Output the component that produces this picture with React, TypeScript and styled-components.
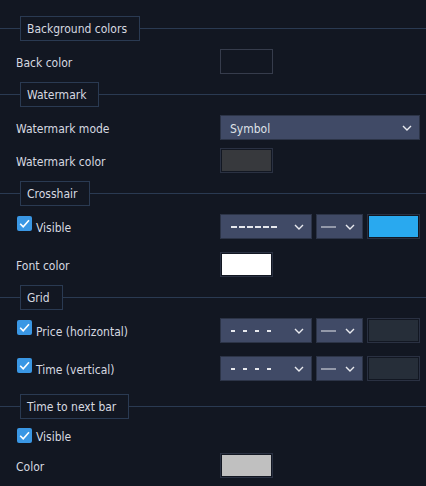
import React from "react";
import styled, { createGlobalStyle } from "styled-components";

const Global = createGlobalStyle`
  html, body { margin: 0; padding: 0; background: #121722; }
  body { font-family: "DejaVu Sans Condensed", "DejaVu Sans", Verdana, sans-serif; font-stretch: condensed; font-size: 12px; color: #d6d9e0; }
`;

const Page = styled.div`
  width: 426px;
  height: 486px;
  background: #121722;
  padding-top: 16px;
  box-sizing: border-box;
  display: flex;
  flex-direction: column;
  gap: 8px;
  overflow: hidden;
`;

const HeaderRow = styled.div`
  display: flex;
  align-items: center;
  height: 25px;
`;

const Line = styled.div<{ $w?: number }>`
  height: 1px;
  background: #2a3a52;
  ${(p) => (p.$w ? `width: ${p.$w}px;` : "flex: 1;")}
`;

const HeaderBox = styled.div`
  height: 25px;
  box-sizing: border-box;
  border: 1px solid #2a3a52;
  padding: 0 12px 0 6px;
  display: flex;
  align-items: center;
  white-space: nowrap;
`;

const Row = styled.div<{ $h?: number; $pb?: number }>`
  display: grid;
  grid-template-columns: 204px 1fr;
  align-items: center;
  padding: 0 6px ${(p) => p.$pb ?? 0}px 16px;
  height: ${(p) => p.$h ?? 25}px;
  box-sizing: content-box;
`;

const Label = styled.div`
  padding-top: 3px;
  white-space: nowrap;
`;

const CheckLabel = styled.label<{ $h: number }>`
  display: flex;
  align-items: center;
  gap: 4px;
  height: ${(p) => p.$h}px;
  white-space: nowrap;
`;

const Box = styled.span<{ $top: number }>`
  width: 15px;
  height: 15px;
  border-radius: 2px;
  background: #3a97e4;
  display: flex;
  align-items: center;
  justify-content: center;
  align-self: flex-start;
  margin-top: ${(p) => p.$top}px;
  margin-left: 1px;
`;

const CheckText = styled.span`
  padding-top: 2px;
`;

const Controls = styled.div`
  display: flex;
  gap: 4px;
`;

const Select = styled.div<{ $w?: number; $pl?: number }>`
  height: 25px;
  box-sizing: border-box;
  ${(p) => (p.$w ? `width: ${p.$w}px;` : "flex: 1;")}
  background: #404a66;
  border: 1px solid #2c3447;
  display: flex;
  align-items: center;
  justify-content: space-between;
  padding: 0 7px 0 ${(p) => p.$pl ?? 9}px;
  color: #dfe2e8;
`;

const SelectText = styled.span`
  padding-top: 2px;
`;

const Swatch = styled.div<{ $fill: string; $border?: string }>`
  width: 53px;
  height: 25px;
  box-sizing: border-box;
  border: 1px solid ${(p) => p.$border ?? "#2a3142"};
  padding: 1px;
  background: #121722;
  &::after {
    content: "";
    display: block;
    width: 100%;
    height: 100%;
    background: ${(p) => p.$fill};
  }
`;

const Chevron = () => (
  <svg width="10" height="6" viewBox="0 0 10 6">
    <path d="M1 1 L5 5 L9 1" stroke="#e8eaef" strokeWidth="1.4" fill="none" />
  </svg>
);

const Check = () => (
  <svg width="13" height="13" viewBox="0 0 13 13">
    <path d="M2.2 6.8 L5.2 9.8 L11 3.2" stroke="#ffffff" strokeWidth="1.6" fill="none" />
  </svg>
);

const Dashes = ({ dash, gap, len }: { dash: number; gap: number; len: number }) => (
  <svg width={len} height="4" viewBox={`0 0 ${len} 4`}>
    <line x1="0" y1="2" x2={len} y2="2" stroke="#e6e8ed" strokeWidth="2" strokeDasharray={`${dash} ${gap}`} />
  </svg>
);

const Solid = () => (
  <svg width="15" height="4" viewBox="0 0 15 4">
    <line x1="0" y1="2" x2="15" y2="2" stroke="#e6e8ed" strokeWidth="1" />
  </svg>
);

const Header = ({ children }: { children: React.ReactNode }) => (
  <HeaderRow>
    <Line $w={20} />
    <HeaderBox>{children}</HeaderBox>
    <Line />
  </HeaderRow>
);

const CheckItem = ({ children, h = 25, top = 2 }: { children: React.ReactNode; h?: number; top?: number }) => (
  <CheckLabel $h={h}>
    <Box $top={top}>
      <Check />
    </Box>
    <CheckText>{children}</CheckText>
  </CheckLabel>
);

const LineControls = ({ dashed, fill }: { dashed: "long" | "short"; fill: string }) => (
  <Controls>
    <Select $w={92} $pl={10}>
      {dashed === "long" ? <Dashes dash={6} gap={2} len={46} /> : <Dashes dash={4} gap={8} len={40} />}
      <Chevron />
    </Select>
    <Select $w={47} $pl={4}>
      <Solid />
      <Chevron />
    </Select>
    <Swatch $fill={fill} />
  </Controls>
);

export default function App() {
  return (
    <>
      <Global />
      <Page>
        <Header>Background colors</Header>
        <Row>
          <Label>Back color</Label>
          <Swatch $fill="#121722" $border="#363c4c" />
        </Row>
        <Header>Watermark</Header>
        <Row>
          <Label>Watermark mode</Label>
          <Select>
            <SelectText>Symbol</SelectText>
            <Chevron />
          </Select>
        </Row>
        <Row>
          <Label>Watermark color</Label>
          <Swatch $fill="#37393d" />
        </Row>
        <Header>Crosshair</Header>
        <Row $pb={5}>
          <CheckItem>Visible</CheckItem>
          <LineControls dashed="long" fill="#29a9ef" />
        </Row>
        <Row>
          <Label>Font color</Label>
          <Swatch $fill="#ffffff" />
        </Row>
        <Header>Grid</Header>
        <Row $pb={5}>
          <CheckItem>Price (horizontal)</CheckItem>
          <LineControls dashed="short" fill="#262e39" />
        </Row>
        <Row $pb={5}>
          <CheckItem>Time (vertical)</CheckItem>
          <LineControls dashed="short" fill="#262e39" />
        </Row>
        <Header>Time to next bar</Header>
        <Row $h={18}>
          <CheckItem h={18} top={1}>Visible</CheckItem>
        </Row>
        <Row>
          <Label>Color</Label>
          <Swatch $fill="#c0c0c0" />
        </Row>
      </Page>
    </>
  );
}
